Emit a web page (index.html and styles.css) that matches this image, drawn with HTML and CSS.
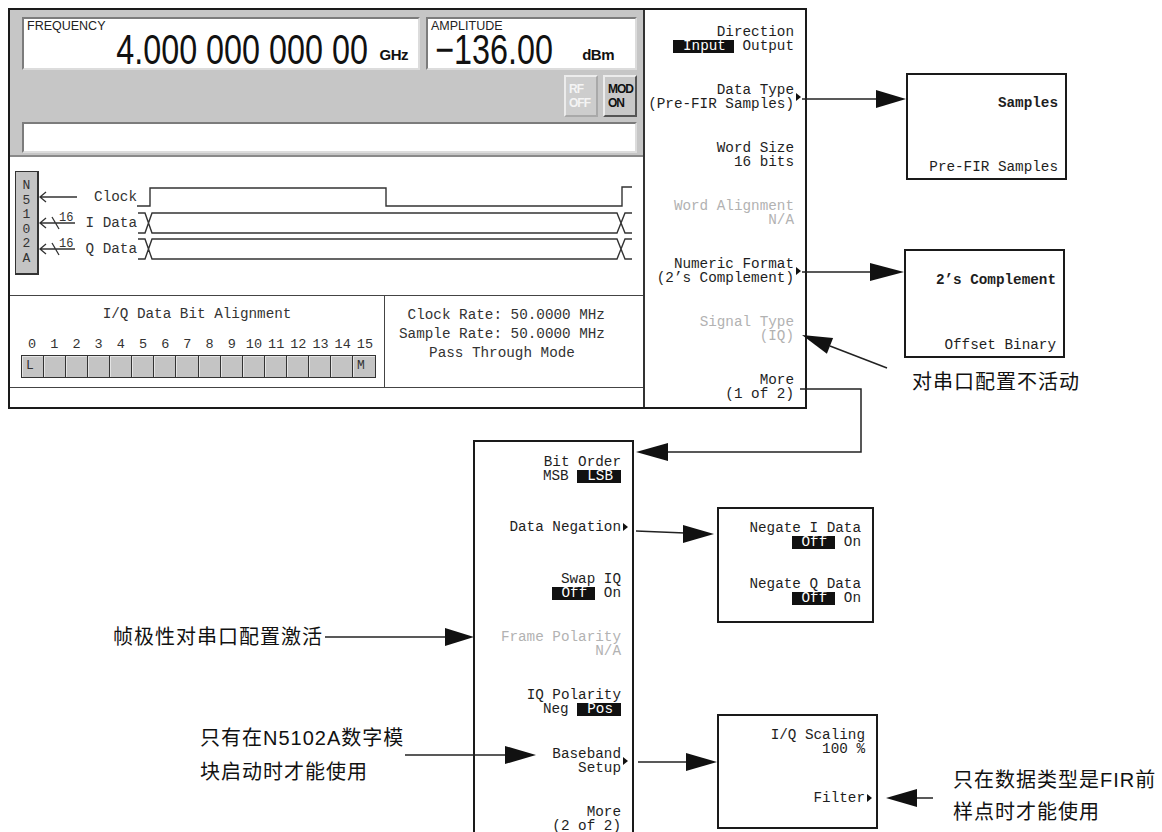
FILE: index.html
```html
<!DOCTYPE html>
<html lang="zh-CN">
<head>
    <meta charset="UTF-8">
    <meta name="viewport" content="width=device-width, initial-scale=1.0">
    <title>N5102A 串口配置菜单</title>
    <link rel="stylesheet" href="styles.css">
</head>
<body>
<div class="canvas">

    <!-- instrument screen -->
    <div class="screen">
        <div class="display">
            <div class="status-area">
                <div class="readouts">
                    <div class="readout freq">
                        <div class="readout-label">FREQUENCY</div>
                        <div class="readout-value"><span class="digits">4.000 000 000 00</span><span class="unit">GHz</span></div>
                    </div>
                    <div class="readout ampl">
                        <div class="readout-label">AMPLITUDE</div>
                        <div class="readout-value"><span class="digits">&minus;136.00</span><span class="unit">dBm</span></div>
                    </div>
                </div>
                <div class="annunciators">
                    <div class="annun off">RF<br>OFF</div>
                    <div class="annun">MOD<br>ON</div>
                </div>
                <div class="message"></div>
            </div>

            <div class="timing">
                <div class="module"><span>N</span><span>5</span><span>1</span><span>0</span><span>2</span><span>A</span></div>
                <svg class="ports" width="41" height="104" viewBox="0 0 41 104">
                    <g stroke="#333" stroke-width="1.3" fill="none">
                        <path d="M1 26 H38 M7 21 L1 26 L7 31"/>
                        <path d="M1 52 H36 M7 47 L1 52 L7 57 M13 46 L20 58"/>
                        <path d="M1 78 H36 M7 73 L1 78 L7 83 M13 72 L20 84"/>
                    </g>
                    <text x="20" y="50" class="bus-width">16</text>
                    <text x="20" y="76" class="bus-width">16</text>
                </svg>
                <div class="signal-names">
                    <div>Clock</div>
                    <div>I Data</div>
                    <div>Q Data</div>
                </div>
                <svg class="waves" width="503" height="104" viewBox="0 0 503 104">
                    <g stroke="#333" stroke-width="1.4" fill="none">
                        <path d="M0 35 H13 V17 H249 V35 H485 V16 H495"/>
                        <path d="M1 42 H8 L15 62 H480 L488 42 H495 M1 62 H8 L15 42 H480 L488 62 H495"/>
                        <path d="M1 68 H8 L15 88 H480 L488 68 H495 M1 88 H8 L15 68 H480 L488 88 H495"/>
                    </g>
                </svg>
            </div>

            <div class="info">
                <div class="align-panel">
                    <div class="align-title">I/Q Data Bit Alignment</div>
                    <div class="bit-row bit-nums">
                        <span>0</span><span>1</span><span>2</span><span>3</span><span>4</span><span>5</span><span>6</span><span>7</span>
                        <span>8</span><span>9</span><span>10</span><span>11</span><span>12</span><span>13</span><span>14</span><span>15</span>
                    </div>
                    <div class="bit-row bits">
                        <span>L</span><span></span><span></span><span></span><span></span><span></span><span></span><span></span>
                        <span></span><span></span><span></span><span></span><span></span><span></span><span></span><span>M</span>
                    </div>
                </div>
                <div class="rate-panel">
                    <div class="rate-lines">
                        <div>Clock Rate: 50.0000 MHz</div>
                        <div>Sample Rate: 50.0000 MHz</div>
                    </div>
                    <div>Pass Through Mode</div>
                </div>
            </div>
            <div class="footer-strip"></div>
        </div>

        <div class="softkeys">
            <div class="key"><div class="key-text">Direction<br><span class="sel">Input</span> Output</div><span class="slot"></span></div>
            <div class="key"><div class="key-text">Data Type<br>(Pre-FIR Samples)</div><span class="slot"><i class="tri"></i></span></div>
            <div class="key"><div class="key-text">Word Size<br>16 bits</div><span class="slot"></span></div>
            <div class="key dim"><div class="key-text">Word Alignment<br>N/A</div><span class="slot"></span></div>
            <div class="key"><div class="key-text">Numeric Format<br>(2&rsquo;s Complement)</div><span class="slot"><i class="tri"></i></span></div>
            <div class="key dim"><div class="key-text">Signal Type<br>(IQ)</div><span class="slot"></span></div>
            <div class="key"><div class="key-text">More<br>(1 of 2)</div><span class="slot"></span></div>
        </div>
    </div>

    <!-- submenus -->
    <div class="choice choice-type">
        <div class="chosen">Samples</div>
        <div>Pre-FIR Samples</div>
    </div>
    <div class="choice choice-format">
        <div class="chosen">2&rsquo;s Complement</div>
        <div>Offset Binary</div>
    </div>

    <div class="menu menu-more">
        <div class="key"><div class="key-text">Bit Order<br>MSB <span class="sel">LSB</span></div><span class="slot"></span></div>
        <div class="key"><div class="key-text">Data Negation</div><span class="slot"><i class="tri"></i></span></div>
        <div class="key"><div class="key-text">Swap IQ<br><span class="sel">Off</span> On</div><span class="slot"></span></div>
        <div class="key dim"><div class="key-text">Frame Polarity<br>N/A</div><span class="slot"></span></div>
        <div class="key"><div class="key-text">IQ Polarity<br>Neg <span class="sel">Pos</span></div><span class="slot"></span></div>
        <div class="key"><div class="key-text">Baseband<br>Setup</div><span class="slot"><i class="tri"></i></span></div>
        <div class="key"><div class="key-text">More<br>(2 of 2)</div><span class="slot"></span></div>
    </div>

    <div class="menu menu-negate">
        <div class="key short"><div class="key-text">Negate I Data<br><span class="sel">Off</span> On</div><span class="slot"></span></div>
        <div class="key short"><div class="key-text">Negate Q Data<br><span class="sel">Off</span> On</div><span class="slot"></span></div>
    </div>

    <div class="menu menu-scaling">
        <div class="key short"><div class="key-text">I/Q Scaling<br>100 %</div><span class="slot"></span></div>
        <div class="key short"><div class="key-text">Filter</div><span class="slot"><i class="tri"></i></span></div>
    </div>

    <!-- notes -->
    <div class="note note-serial">对串口配置不活动</div>
    <div class="note note-frame">帧极性对串口配置激活</div>
    <div class="note note-module">只有在N5102A数字模<br>块启动时才能使用</div>
    <div class="note note-filter">只在数据类型是FIR前<br>样点时才能使用</div>

    <!-- connector arrows -->
    <svg class="links" width="1162" height="832" viewBox="0 0 1162 832">
        <g stroke="#222" stroke-width="1.5" fill="none">
            <path d="M802 99 H878"/>
            <path d="M802 272 H872"/>
            <path d="M887 368 L830 346"/>
            <path d="M800 389 H861 V452 H668"/>
            <path d="M636 531 L685 533"/>
            <path d="M325 637 H447"/>
            <path d="M405 755 H507"/>
            <path d="M638 762 H688"/>
            <path d="M915 798 H933"/>
        </g>
        <g fill="#111">
            <polygon points="876,90 906,99 876,108"/>
            <polygon points="870,263 904,272 870,281"/>
            <polygon points="802,335 826.9,353.8 833.1,338"/>
            <polygon points="668,443 636,452 668,461"/>
            <polygon points="683,525 714,534 683,543"/>
            <polygon points="445,628 474,637 445,646"/>
            <polygon points="505,746 536,755 505,764"/>
            <polygon points="686,753 717,762 686,771"/>
            <polygon points="917,789 886,798 917,807"/>
        </g>
    </svg>
</div>
</body>
</html>
```

FILE: styles.css
```css
* {
    box-sizing: border-box;
}
body {
    margin: 0;
    background: #fff;
    font-family: "Liberation Mono", "DejaVu Sans Mono", monospace;
    font-size: 14.3px;
    color: #222;
}
.canvas {
    position: relative;
    width: 1162px;
    height: 832px;
    overflow: hidden;
    background: #fff;
}

/* instrument screen */
.screen {
    position: absolute;
    left: 8px;
    top: 8px;
    width: 799px;
    height: 401px;
    border: 2px solid #1a1a1a;
    display: flex;
}
.display {
    width: 633px;
    display: flex;
    flex-direction: column;
}
.status-area {
    height: 147px;
    background: #c6c6c6;
    border-bottom: 2px solid #8a8a8a;
    padding: 7px 6px 0 12px;
}
.readouts {
    display: flex;
    gap: 6px;
    height: 53px;
}
.readout {
    background: #fff;
    border: 2px solid;
    border-color: #7c7c7c #dcdcdc #dcdcdc #7c7c7c;
}
.freq {
    width: 398px;
}
.ampl {
    width: 211px;
}
.readout-label {
    font: 12.5px/13px "Liberation Sans", Arial, sans-serif;
    padding: 1px 0 0 3px;
    height: 14px;
    color: #222;
}
.readout-value {
    display: flex;
    justify-content: flex-end;
    align-items: flex-end;
    height: 34px;
    white-space: pre;
}
.freq .readout-value {
    padding-right: 10px;
}
.ampl .readout-value {
    padding-right: 21px;
}
.digits {
    font: 42px/34px "Liberation Sans", Arial, sans-serif;
    color: #111;
    transform: scaleX(.77);
    transform-origin: right bottom;
}
.unit {
    font: bold 15px/15px "Liberation Sans", Arial, sans-serif;
    letter-spacing: -0.5px;
    margin: 0 0 5px 12px;
    color: #111;
}
.ampl .unit {
    margin-left: 29px;
}
.annunciators {
    display: flex;
    justify-content: flex-end;
    gap: 5px;
    height: 52px;
    padding-top: 5px;
}
.annun {
    width: 34px;
    height: 42px;
    padding: 5px 0 0 3px;
    font: bold 12px/14px "Liberation Sans", Arial, sans-serif;
    letter-spacing: -1px;
    background: #c8c8c8;
    border: 2px solid;
    border-color: #ececec #555 #555 #ececec;
    color: #111;
}
.annun.off {
    color: #f4f4f4;
    background: #cdcdcd;
    border-color: #ececec #a9a9a9 #a9a9a9 #ececec;
}
.message {
    height: 31px;
    background: #fff;
    border: 2px solid;
    border-color: #7c7c7c #dcdcdc #dcdcdc #7c7c7c;
}

/* timing diagram */
.timing {
    height: 139px;
    border-bottom: 1.5px solid #444;
    display: flex;
    align-items: flex-start;
    padding-top: 14px;
}
.module {
    margin-left: 5px;
    width: 24px;
    height: 104px;
    background: #c4c4c4;
    border: 1px solid #333;
    border-right-width: 2px;
    border-bottom-width: 2px;
    display: flex;
    flex-direction: column;
    align-items: center;
    justify-content: center;
    font-size: 13px;
    line-height: 14.5px;
    color: #333;
}
.ports {
    display: block;
}
.bus-width {
    font: 12px "Liberation Mono", monospace;
    fill: #333;
}
.signal-names {
    width: 57px;
    padding-top: 13px;
    text-align: right;
    line-height: 26px;
    color: #333;
}
.waves {
    display: block;
}

/* bit alignment and rates */
.info {
    height: 92px;
    display: flex;
    border-bottom: 1.5px solid #444;
}
.align-panel {
    width: 375px;
    border-right: 1.5px solid #444;
    padding: 10px 0 0 11px;
}
.align-title {
    text-align: center;
    line-height: 16px;
    padding-right: 11px;
    color: #333;
}
.bit-row {
    display: grid;
    grid-template-columns: repeat(16, 1fr);
    width: 355px;
}
.bit-nums {
    margin-top: 15px;
    line-height: 16px;
    text-align: center;
    color: #333;
    font-size: 13.5px;
}
.bits {
    margin-top: 2px;
    height: 23px;
    border: 1.5px solid #333;
    background: #c4c4c4;
}
.bits span {
    border-right: 1.5px solid #333;
    box-shadow: inset 1px 1px #e4e4e4;
    font-size: 13px;
    line-height: 20px;
    padding-left: 4px;
    color: #333;
}
.bits span:last-child {
    border-right: none;
}
.rate-panel {
    flex: 1;
    display: flex;
    flex-direction: column;
    align-items: center;
    padding: 10px 24px 0 0;
    line-height: 19px;
    color: #333;
}
.rate-lines {
    text-align: right;
}
.footer-strip {
    flex: 1;
}

/* softkeys */
.softkeys {
    flex: 1;
    border-left: 2px solid #333;
    display: flex;
    flex-direction: column;
}
.key {
    height: 58px;
    flex-shrink: 0;
    display: flex;
    align-items: center;
    justify-content: flex-end;
    padding-right: 3px;
}
.key-text {
    text-align: right;
    line-height: 14px;
    white-space: pre;
    color: #1e1e1e;
}
.dim .key-text {
    color: #b2b2b2;
}
.sel {
    display: inline-block;
    line-height: 13px;
    height: 13px;
    padding: 0 8px 0 10px;
    background: #111;
    color: #fff;
}
.slot {
    width: 8px;
    display: flex;
    justify-content: center;
}
.tri {
    width: 0;
    height: 0;
    border-left: 5px solid #111;
    border-top: 4px solid transparent;
    border-bottom: 4px solid transparent;
}

/* submenus */
.menu {
    position: absolute;
    border: 2px solid #1a1a1a;
    background: #fff;
    display: flex;
    flex-direction: column;
}
.menu .key {
    height: 58.33px;
    padding-bottom: 4px;
}
.menu .key.short {
    height: 56px;
}
.menu-more {
    left: 473px;
    top: 440px;
    width: 161px;
    height: 410px;
}
.menu-negate {
    left: 717px;
    top: 507px;
    width: 157px;
    height: 116px;
}
.menu-scaling {
    left: 717px;
    top: 714px;
    width: 161px;
    height: 115px;
}
.choice {
    position: absolute;
    border: 2px solid #1a1a1a;
    background: #fff;
    display: flex;
    flex-direction: column;
    justify-content: space-between;
    align-items: flex-end;
    padding: 21px 7px 4px;
    line-height: 14px;
    color: #1e1e1e;
}
.chosen {
    font-weight: bold;
}
.choice-type {
    left: 906px;
    top: 73px;
    width: 161px;
    height: 107px;
}
.choice-format {
    left: 904px;
    top: 249px;
    width: 161px;
    height: 109px;
    padding-top: 22px;
}

/* notes */
.note {
    position: absolute;
    font: 20px/30px "Liberation Sans", "Noto Sans CJK SC", sans-serif;
    letter-spacing: 1px;
    color: #111;
    white-space: nowrap;
}
.note-serial {
    left: 912px;
    top: 367px;
}
.note-frame {
    left: 113px;
    top: 622px;
}
.note-module {
    left: 200px;
    top: 721px;
    line-height: 34px;
}
.note-filter {
    left: 953px;
    top: 764px;
    line-height: 32px;
}

.links {
    position: absolute;
    left: 0;
    top: 0;
    pointer-events: none;
}
```
